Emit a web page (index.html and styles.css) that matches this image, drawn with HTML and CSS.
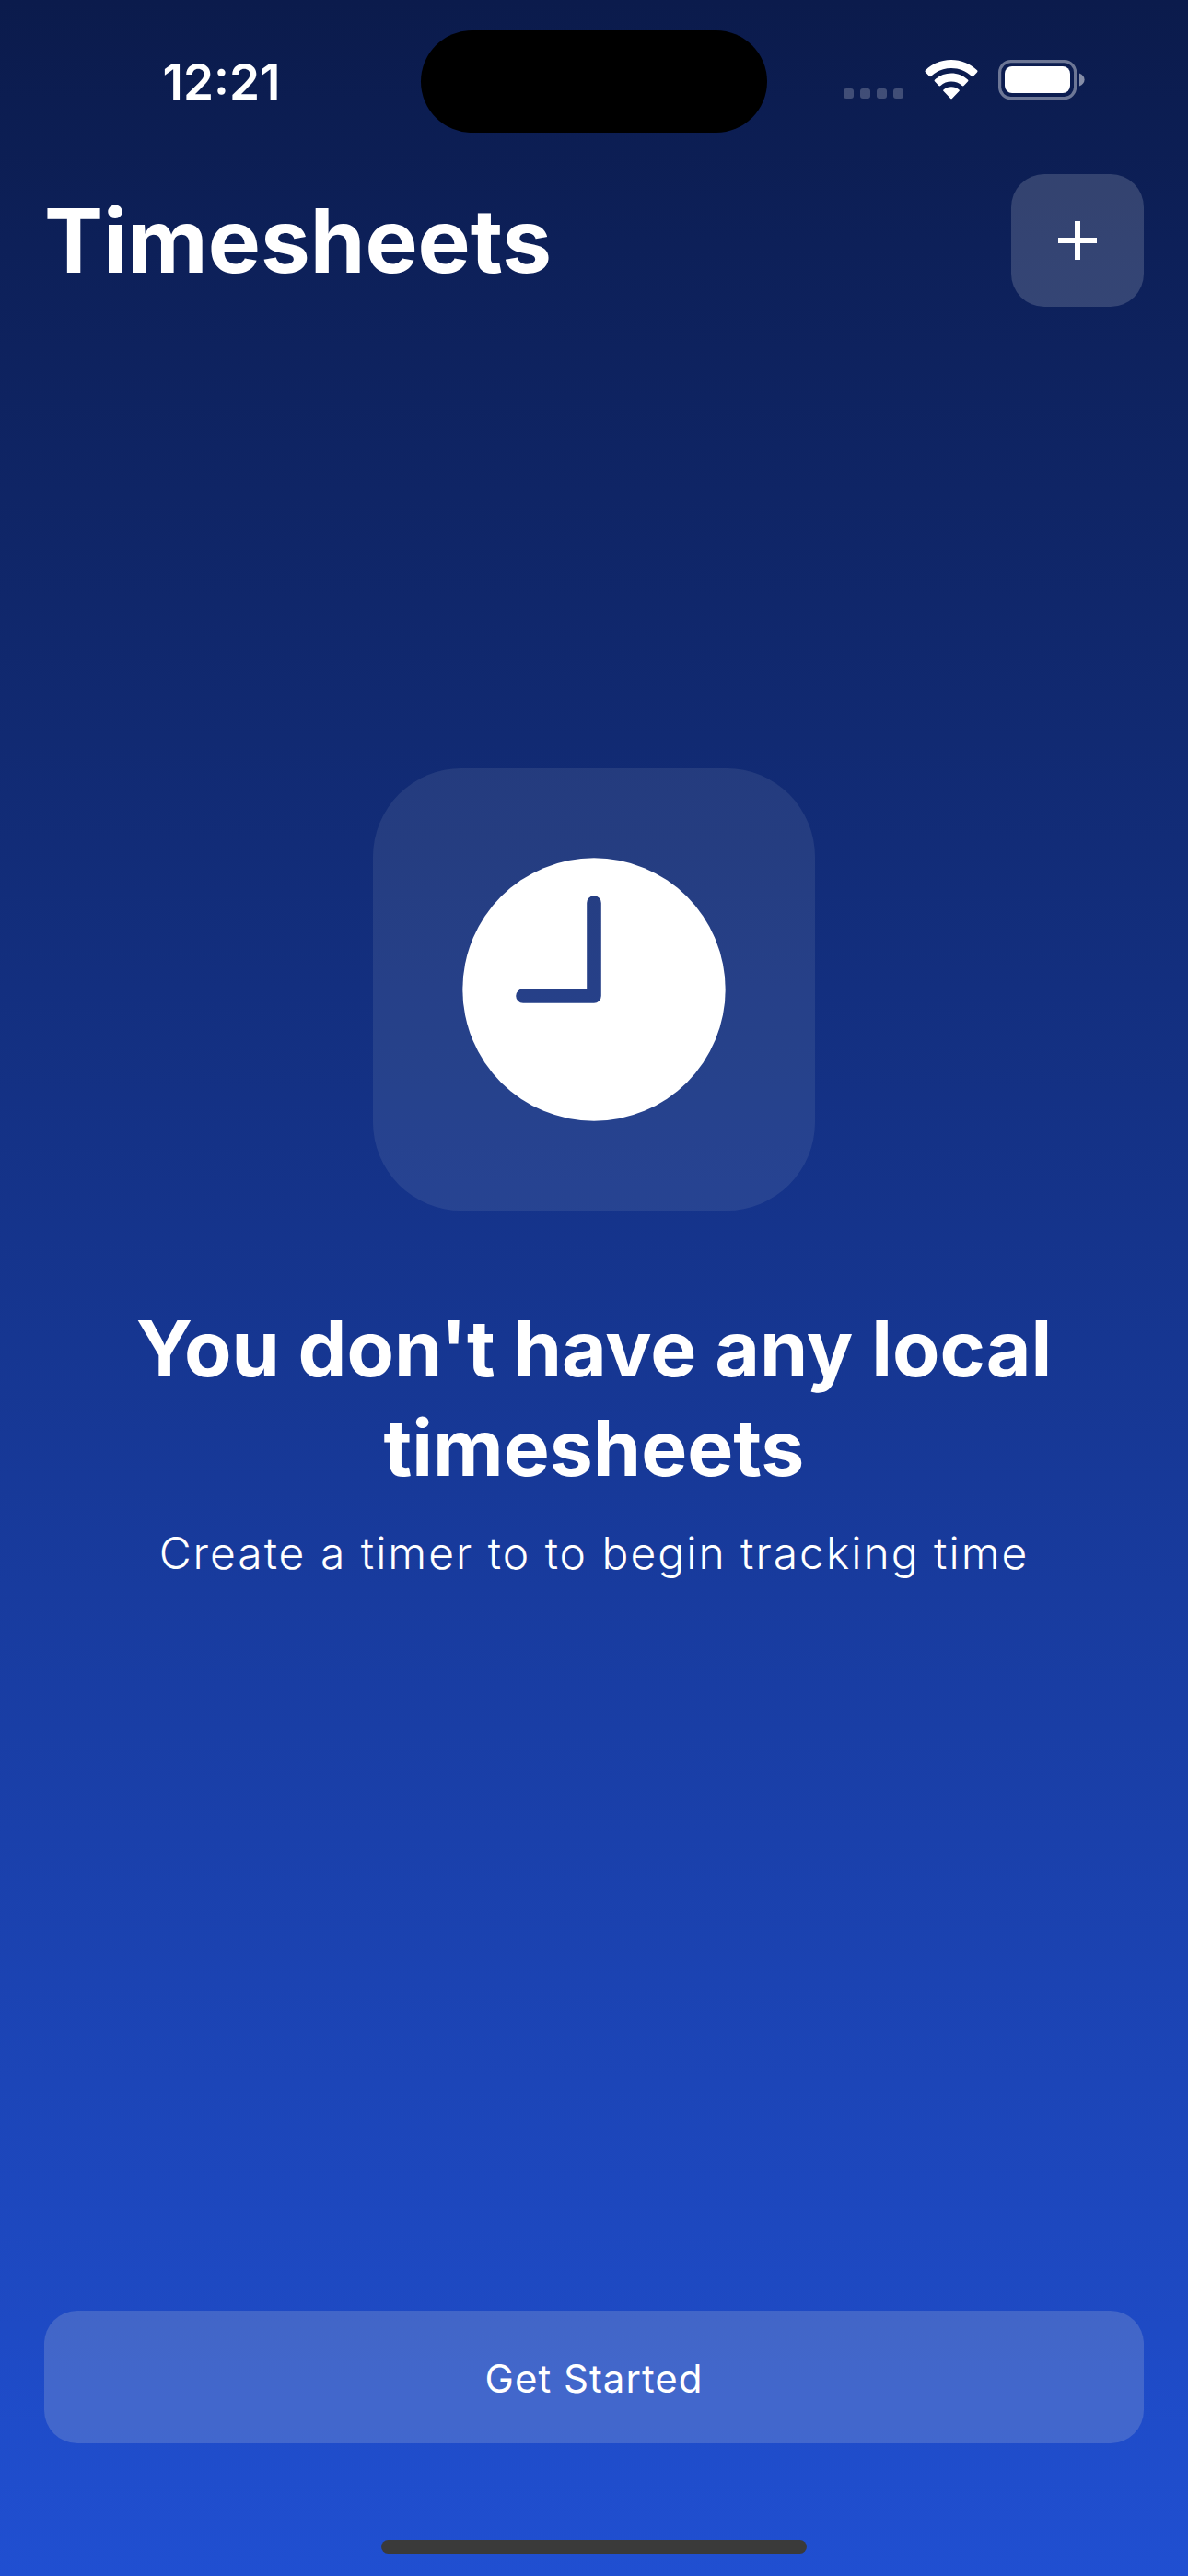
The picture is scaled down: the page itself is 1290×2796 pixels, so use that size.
FILE: index.html
```html
<!DOCTYPE html>
<html lang="en">
<head>
<meta charset="utf-8">
<meta name="viewport" content="width=device-width, initial-scale=1">
<title>Timesheets</title>
<link rel="stylesheet" href="styles.css">
</head>
<body>
<div class="screen">
  <div class="status-bar">
    <time class="status-time">12:21</time>
    <div class="island"></div>
    <div class="status-icons">
      <svg class="signal" viewBox="0 0 66 44" aria-hidden="true">
        <rect x="0" y="31" width="11" height="11" rx="3"/>
        <rect x="18" y="31" width="11" height="11" rx="3"/>
        <rect x="36" y="31" width="11" height="11" rx="3"/>
        <rect x="54" y="31" width="11" height="11" rx="3"/>
      </svg>
      <svg class="wifi" viewBox="0 0 58 44" aria-hidden="true">
        <path d="M29 0C39.500 0 49.500 4 57 11.300C57.700 12 57.700 12.700 57 13.400L52.900 17.700C52.300 18.300 51.600 18.300 51 17.700C45 12 37.300 8.900 29 8.900C20.700 8.900 13 12 7 17.700C6.400 18.300 5.700 18.300 5.100 17.700L1 13.400C.3 12.700 .3 12 1 11.300C8.500 4 18.500 0 29 0Z"/>
        <path d="M29 14.600C35.700 14.600 42 17.100 46.900 21.600C47.600 22.300 47.600 22.900 46.900 23.600L42.600 28C42 28.600 41.400 28.600 40.700 28C37.500 25.100 33.400 23.600 29 23.600C24.600 23.600 20.500 25.100 17.300 28C16.600 28.600 16 28.600 15.400 28L11.100 23.600C10.400 22.900 10.400 22.300 11.100 21.600C16 17.100 22.300 14.600 29 14.600Z"/>
        <path d="M29 29.300C32.200 29.300 35 30.300 37.300 32.200C38 32.800 38 33.500 37.400 34.100L30 41.700C29.300 42.400 28.700 42.400 28 41.700L20.600 34.100C20 33.500 20 32.800 20.700 32.200C23 30.300 25.800 29.300 29 29.300Z"/>
      </svg>
      <svg class="battery" viewBox="0 0 99 44" aria-hidden="true">
        <rect x="1.600" y="1.600" width="82" height="40" rx="12" fill="none" stroke="#fff" stroke-opacity=".4" stroke-width="3.200"/>
        <rect x="7" y="7" width="71" height="29" rx="8" fill="#fff"/>
        <path d="M88 14.500C91.500 16 93.600 18.500 93.600 21.500C93.600 24.500 91.500 27 88 28.500Z" fill="#fff" fill-opacity=".5"/>
      </svg>
    </div>
  </div>

  <header class="header">
    <h1 class="title">Timesheets</h1>
    <button class="add-button" type="button" aria-label="Add timesheet">
      <svg class="plus" viewBox="0 0 42 42" aria-hidden="true"><path d="M21 0V42M0 21H42"/></svg>
    </button>
  </header>

  <main class="empty">
    <div class="tile">
      <svg class="clock" viewBox="0 0 286 286" aria-hidden="true">
        <defs>
          <mask id="hands">
            <rect width="286" height="286" fill="#fff"/>
            <path d="M143 49V150H66" fill="none" stroke="#000" stroke-width="15.600" stroke-linecap="round" stroke-linejoin="round"/>
          </mask>
        </defs>
        <circle cx="143" cy="143" r="142.700" fill="#fff" mask="url(#hands)"/>
      </svg>
    </div>
    <h2 class="heading">You don't have any local timesheets</h2>
    <p class="hint">Create a timer to to begin tracking time</p>
  </main>

  <footer class="footer">
    <button class="start-button" type="button">Get Started</button>
    <div class="home-indicator"></div>
  </footer>
</div>
</body>
</html>
```

FILE: styles.css
```css
* {
  box-sizing: border-box;
}

body {
  margin: 0;
  font-family: Inter, "Liberation Sans", sans-serif;
  color: #fff;
}

.screen {
  display: flex;
  flex-direction: column;
  min-height: 100vh;
  background: linear-gradient(#0b1b4c, #204fd1);
}

.status-bar {
  display: grid;
  grid-template-columns: 1fr 376px 1fr;
  align-items: center;
  padding: 33px 24px;
}

.status-time {
  text-align: center;
  font-size: 53px;
  line-height: 64px;
  font-weight: 600;
}

.island {
  height: 111px;
  border-radius: 56px;
  background: #000;
}

.status-icons {
  display: flex;
  justify-content: center;
  gap: 22px;
  padding-bottom: 4px;
}

.signal,
.wifi,
.battery {
  height: 44px;
}

.signal {
  width: 66px;
  fill: rgba(255, 255, 255, 0.22);
}

.wifi {
  width: 58px;
  fill: #fff;
}

.battery {
  width: 99px;
}

.header {
  display: flex;
  align-items: center;
  justify-content: space-between;
  padding: 12px 48px;
}

.title {
  margin: 0;
  font-size: 96px;
  line-height: 120px;
  font-weight: 700;
}

.add-button,
.start-button {
  height: 144px;
  padding: 0;
  border: 0;
  border-radius: 36px;
  background: rgba(209, 213, 219, 0.2);
  color: #fff;
  font-family: inherit;
}

.add-button {
  display: flex;
  align-items: center;
  justify-content: center;
  width: 144px;
}

.plus {
  width: 42px;
  height: 42px;
  fill: none;
  stroke: #fff;
  stroke-width: 6;
}

.empty {
  flex: 1;
  display: flex;
  flex-direction: column;
  align-items: center;
  justify-content: center;
  padding: 0 48px 298px;
  text-align: center;
}

.tile {
  display: flex;
  align-items: center;
  justify-content: center;
  width: 480px;
  height: 480px;
  border-radius: 96px;
  background: rgba(209, 213, 219, 0.1);
}

.clock {
  width: 286px;
  height: 286px;
}

.heading {
  margin: 96px 0 24px;
  font-size: 84px;
  line-height: 108px;
  font-weight: 700;
}

.hint {
  margin: 0;
  font-size: 48px;
  line-height: 72px;
  font-weight: 300;
  letter-spacing: 2px;
}

.footer {
  display: flex;
  flex-direction: column;
  align-items: center;
  gap: 105px;
  padding: 0 48px 24px;
}

.start-button {
  width: 100%;
  padding-top: 3px;
  font-size: 42px;
  line-height: 60px;
  font-weight: 400;
  letter-spacing: 1px;
}

.home-indicator {
  width: 462px;
  height: 15px;
  border-radius: 8px;
  background: #3a3a3a;
}
```
